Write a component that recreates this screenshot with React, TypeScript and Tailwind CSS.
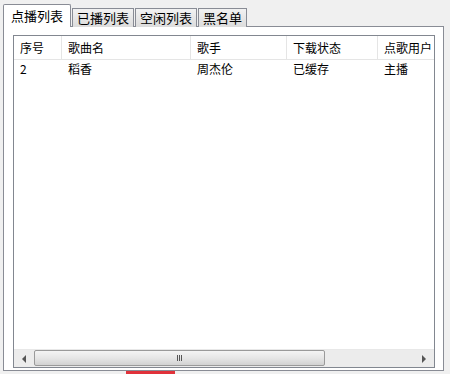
import React from 'react';

const tabs = ['点播列表', '已播列表', '空闲列表', '黑名单'];

const columns = [
  { title: '序号', w: 'w-[48px]' },
  { title: '歌曲名', w: 'w-[129px]' },
  { title: '歌手', w: 'w-[96px]' },
  { title: '下载状态', w: 'w-[91px]' },
  { title: '点歌用户', w: 'w-[80px]' },
];

const rows = [['2', '稻香', '周杰伦', '已缓存', '主播']];

const App: React.FC = () => {
  return (
    <div className="w-[450px] h-[374px] bg-[#f0f0f0] overflow-hidden relative text-[12px] text-black" style={{ fontFamily: '"Noto Sans CJK SC", "Liberation Sans", sans-serif' }}>
      <div className="pl-[3px] pt-[4px]">
        {/* tab strip */}
        <div className="flex items-end h-[23px] relative z-10">
          {tabs.map((t, i) =>
            i === 0 ? (
              <div key={t} className="h-[23px] w-[68px] bg-white border border-b-0 border-[#898c95] rounded-t-[2px] flex items-center justify-center text-[13px] pb-[1px]">{t}</div>
            ) : (
              <div key={t} className="h-[19px] px-[4px] -ml-px first:ml-0 bg-gradient-to-b from-[#f2f2f2] to-[#dcdcdc] border border-b-0 border-[#898c95] flex items-center justify-center text-[13px] ml-[1px]">{t}</div>
            )
          )}
        </div>
        {/* panel */}
        <div className="-mt-px w-[441px] h-[345px] bg-white border border-[#898c95] pl-[9px] pr-[8px] pt-[8px] pb-[2px]">
          <div className="w-[422px] h-[333px] border border-[#828790] flex flex-col bg-white">
            <div className="flex h-[24px] border-b border-[#e5e5e5] overflow-hidden">
              {columns.map((c, i) => (
                <div key={c.title} className={`${c.w} shrink-0 pl-[6px] flex items-center whitespace-nowrap overflow-hidden ${i < columns.length - 1 ? 'border-r border-[#e5e5e5]' : ''}`}>{c.title}</div>
              ))}
            </div>
            <div className="flex-1">
              {rows.map((r, ri) => (
                <div key={ri} className="flex h-[18px] items-center">
                  {r.map((v, i) => (
                    <div key={i} className={`${columns[i].w} shrink-0 pl-[6px] whitespace-nowrap`}>{v}</div>
                  ))}
                </div>
              ))}
            </div>
            {/* horizontal scrollbar */}
            <div className="h-[18px] flex bg-[#ececec] border-t border-[#e8e8e8]">
              <div className="w-[20px] flex items-center justify-center">
                <div className="w-0 h-0 border-y-[4px] border-y-transparent border-r-[4px] border-r-[#555]" />
              </div>
              <div className="w-[291px] h-[16px] mt-[0px] rounded-[2px] border border-[#9a9a9a] bg-gradient-to-b from-[#f4f4f4] via-[#e6e6e6] to-[#d2d2d2] flex items-center justify-center">
                <div className="flex gap-[1px]">
                  <div className="w-[1px] h-[6px] bg-[#555]" />
                  <div className="w-[1px] h-[6px] bg-[#555]" />
                  <div className="w-[1px] h-[6px] bg-[#555]" />
                </div>
              </div>
              <div className="flex-1" />
              <div className="w-[20px] flex items-center justify-center">
                <div className="w-0 h-0 border-y-[4px] border-y-transparent border-l-[4px] border-l-[#555]" />
              </div>
            </div>
          </div>
        </div>
      </div>
      <div className="absolute left-[126px] top-[371px] w-[49px] h-[3px] bg-[#e0323a]" />
    </div>
  );
};

export default App;
